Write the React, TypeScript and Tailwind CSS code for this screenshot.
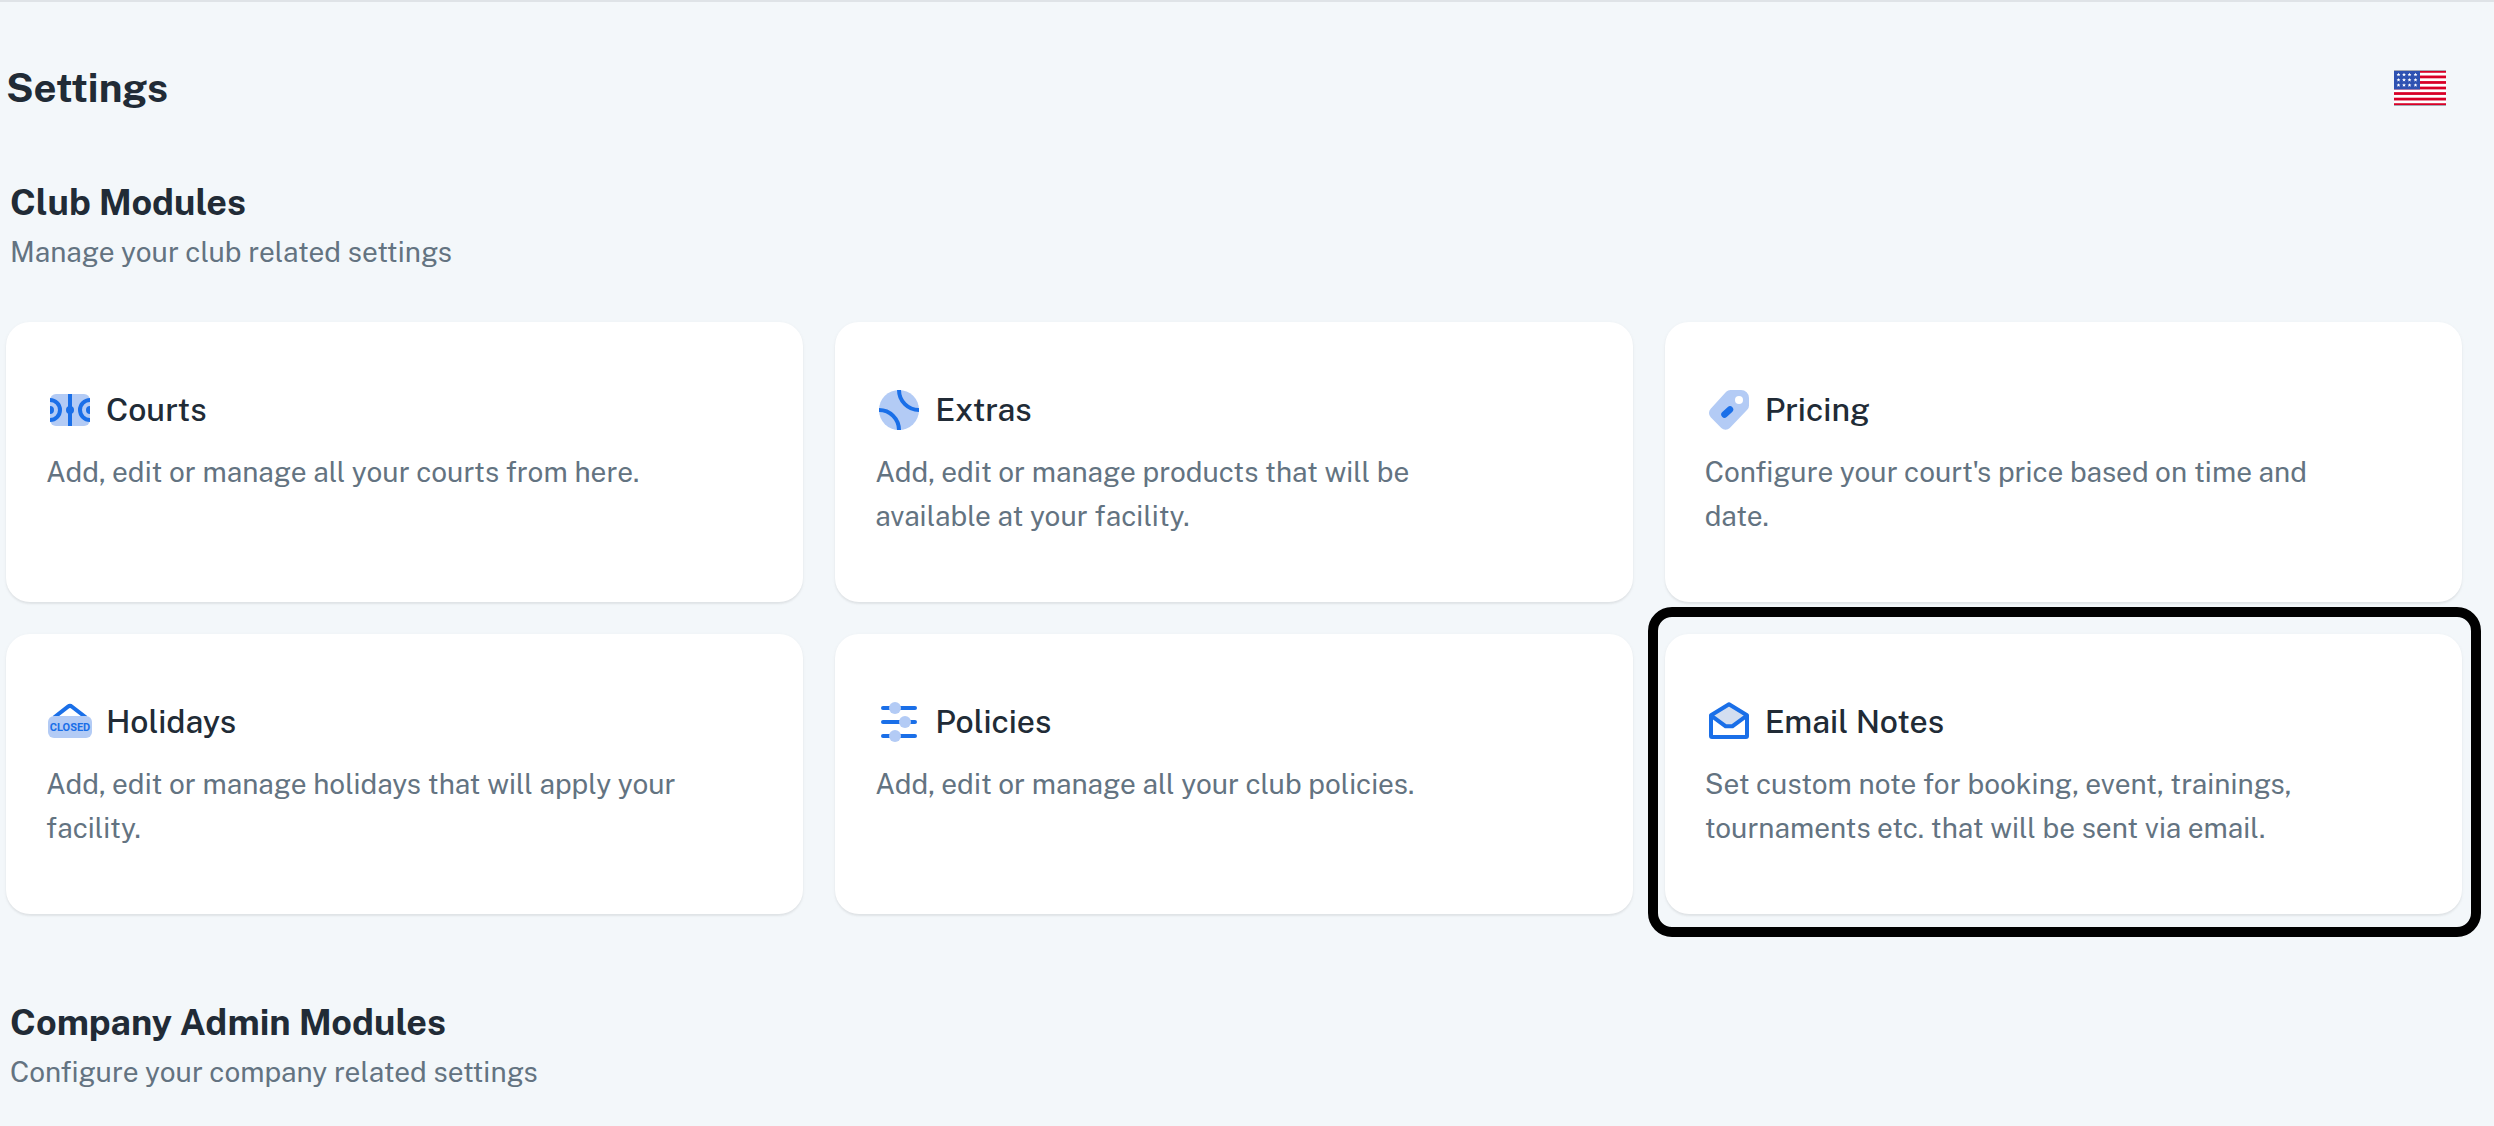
import type { ReactNode } from "react";

const BLUE = "#1A6FE8";
const LIGHT = "#B3CBF5";

function Icon({ children }: { children: ReactNode }) {
  return (
    <svg viewBox="0 0 48 48" className="size-12 shrink-0" fill="none" aria-hidden="true">
      {children}
    </svg>
  );
}

function CourtsIcon() {
  return (
    <Icon>
      <rect x="4" y="8" width="40" height="32" rx="6" fill={LIGHT} />
      <path d="M24 8v32" stroke={BLUE} strokeWidth="4" />
      <circle cx="24" cy="24" r="4" fill={BLUE} />
      <path d="M4 14a10 10 0 0 1 0 20M44 14a10 10 0 0 0 0 20" stroke={BLUE} strokeWidth="4" />
      <path d="M4 20a4 4 0 0 1 0 8zM44 20a4 4 0 0 0 0 8z" fill={BLUE} />
    </Icon>
  );
}

function ExtrasIcon() {
  return (
    <Icon>
      <circle cx="24" cy="24" r="20" fill={LIGHT} />
      <path d="M24 4a20 20 0 0 0 20 20M4 24a20 20 0 0 1 20 20" stroke={BLUE} strokeWidth="4" />
    </Icon>
  );
}

function PricingIcon() {
  return (
    <Icon>
      <path
        d="M25.5 4H36a8 8 0 0 1 8 8v7.5a6 6 0 0 1-1.8 4.3L24.8 42a6 6 0 0 1-8.5 0L5.7 31.2a6 6 0 0 1 0-8.4L21.2 5.800A6 6 0 0 1 25.5 4z"
        fill={LIGHT}
      />
      <circle cx="34" cy="14" r="4" fill="#fff" />
      <path d="M19.5 28.5l5.500-5" stroke={BLUE} strokeWidth="6.5" strokeLinecap="round" />
    </Icon>
  );
}

function HolidaysIcon() {
  return (
    <Icon>
      <path d="M8 19.5L22 8.700a3.200 3.200 0 0 1 4 0L40 19.500" stroke={BLUE} strokeWidth="4" />
      <rect x="2" y="18" width="44" height="22" rx="6" fill={LIGHT} />
      <text
        x="24"
        y="33"
        textAnchor="middle"
        fontSize="11"
        fontWeight="700"
        fontFamily="Roboto, sans-serif"
        fill={BLUE}
      >
        CLOSED
      </text>
    </Icon>
  );
}

function PoliciesIcon() {
  return (
    <Icon>
      <path d="M8 10h32M8 24h32M8 38h32" stroke={BLUE} strokeWidth="4" strokeLinecap="round" />
      <circle cx="20" cy="10" r="6" fill={LIGHT} />
      <circle cx="30" cy="24" r="6" fill={LIGHT} />
      <circle cx="20" cy="38" r="6" fill={LIGHT} />
    </Icon>
  );
}

function EmailIcon() {
  return (
    <Icon>
      <path d="M24 6.5L41 18L28.5 28.2h-9L7 18z" fill="#D3DEF0" />
      <path
        d="M6 17.2L24 6.3l18 10.9V38a1 1 0 0 1-1 1H7a1 1 0 0 1-1-1z"
        stroke={BLUE}
        strokeWidth="4"
        strokeLinejoin="round"
      />
      <path d="M6.5 17.8L20.5 28.2h7L41.5 17.8" stroke={BLUE} strokeWidth="4" />
    </Icon>
  );
}

const stripes = [0, 2, 4, 6, 8, 10, 12];
const starColumns = [4.5, 10, 15.5, 21.5];
const starRows = [4.5, 9.8, 15];

function FlagIcon() {
  return (
    <svg viewBox="0 0 52 36" className="h-9 w-[52px]" aria-hidden="true">
      <rect width="52" height="36" fill="#fff" />
      {stripes.map((n) => (
        <rect key={n} y={(n * 36) / 13} width="52" height={36 / 13} fill="#D80027" />
      ))}
      <rect width="26" height="19.4" fill="#2E52B2" />
      <path d="M0 .5h52M0 35.5h52" stroke="#A6AAB5" strokeWidth="1" />
      {starRows.map((y) =>
        starColumns.map((x) => (
          <path
            key={`${x}-${y}`}
            d={`M${x} ${y - 1.8}l.6 1.2 1.3.1-1 .9.4 1.3-1.3-.7-1.3.7.4-1.3-1-.9 1.3-.1z`}
            fill="#fff"
          />
        )),
      )}
    </svg>
  );
}

type Module = { title: string; text: string; icon: ReactNode; highlighted?: boolean };

const clubModules: Module[] = [
  { title: "Courts", text: "Add, edit or manage all your courts from here.", icon: <CourtsIcon /> },
  {
    title: "Extras",
    text: "Add, edit or manage products that will be available at your facility.",
    icon: <ExtrasIcon />,
  },
  {
    title: "Pricing",
    text: "Configure your court's price based on time and date.",
    icon: <PricingIcon />,
  },
  {
    title: "Holidays",
    text: "Add, edit or manage holidays that will apply your facility.",
    icon: <HolidaysIcon />,
  },
  { title: "Policies", text: "Add, edit or manage all your club policies.", icon: <PoliciesIcon /> },
  {
    title: "Email Notes",
    text: "Set custom note for booking, event, trainings, tournaments etc. that will be sent via email.",
    icon: <EmailIcon />,
    highlighted: true,
  },
];

function ModuleCard({ title, text, icon, highlighted }: Module) {
  return (
    <a
      href="#"
      className="relative block rounded-3xl bg-white py-16 pr-29 pl-10 shadow-[0_2px_2px_rgba(0,0,0,0.06),0_1px_4px_rgba(0,0,0,0.04)]"
    >
      <div className="flex items-center gap-3">
        {icon}
        <h3 className="text-[32px] leading-12 font-medium">{title}</h3>
      </div>
      <p className="mt-4 text-[28px] leading-11 text-[#637381]">{text}</p>
      {highlighted && (
        <span className="pointer-events-none absolute -top-[27px] -right-[19px] -bottom-[23px] -left-[17px] rounded-3xl border-10 border-black" />
      )}
    </a>
  );
}

function SectionHeading({ title, text }: { title: string; text: string }) {
  return (
    <div className="pl-1">
      <h2 className="text-[36px] leading-14 font-bold">{title}</h2>
      <p className="text-[28px] leading-11 text-[#637381]">{text}</p>
    </div>
  );
}

export default function App() {
  return (
    <main className="min-h-screen border-t-2 border-[#DFE3E7] bg-[#F3F7FA] pt-14 pr-8 pl-1.5 font-['Public_Sans','Inter',sans-serif] text-[#212B36]">
      <header className="flex items-center justify-between pr-4">
        <h1 className="text-[40px] leading-15 font-bold">Settings</h1>
        <button type="button" aria-label="Language: English (US)">
          <FlagIcon />
        </button>
      </header>
      <section className="mt-14">
        <SectionHeading title="Club Modules" text="Manage your club related settings" />
        <div className="mt-12 grid auto-rows-fr grid-cols-3 gap-8">
          {clubModules.map((module) => (
            <ModuleCard key={module.title} {...module} />
          ))}
        </div>
      </section>
      <section className="mt-20">
        <SectionHeading title="Company Admin Modules" text="Configure your company related settings" />
      </section>
    </main>
  );
}
